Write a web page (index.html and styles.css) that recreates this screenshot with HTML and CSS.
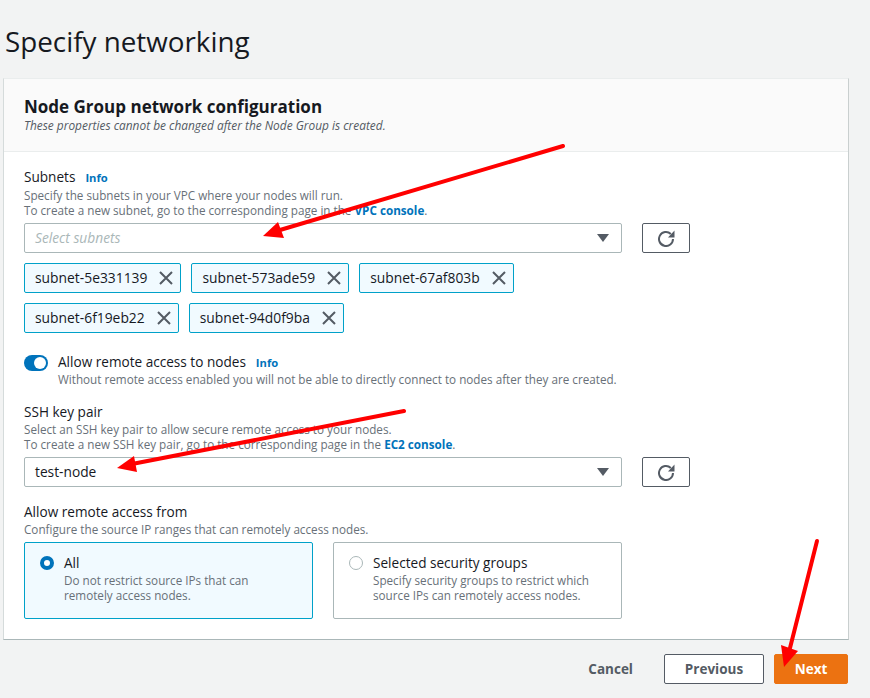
FILE: index.html
```html
<!DOCTYPE html>
<html lang="en">
<head>
  <meta charset="UTF-8" />
  <title>Specify networking</title>
  <link rel="stylesheet" href="styles.css">
</head>
<body>

<h1 class="page-title">Specify networking</h1>

<section class="card">
  <header class="card-header">
    <h2>Node Group network configuration</h2>
    <p>These properties cannot be changed after the Node Group is created.</p>
  </header>

  <div class="card-body">
    <div class="label-row subnets-label">
      <span class="label">Subnets</span>
      <a class="info">Info</a>
    </div>
    <p class="desc">Specify the subnets in your VPC where your nodes will run.</p>
    <p class="desc">To create a new subnet, go to the corresponding page in the <a class="link">VPC console</a>.</p>

    <div class="select-row">
      <div class="select placeholder">
        <span>Select subnets</span>
        <i class="caret"></i>
      </div>
      <button class="refresh">
        <svg width="18" height="18" viewBox="0 0 18 18"><path d="M13.8 4.9A7 7 0 1 0 16 10" fill="none" stroke="#545b64" stroke-width="2"/><path d="M11 8.5h6.5V1.5z" fill="#545b64"/></svg>
      </button>
    </div>

    <div class="chips">
      <span class="chip">subnet-5e331139<svg class="x" viewBox="0 0 14 14"><path d="M1 1l12 12M13 1L1 13"/></svg></span>
      <span class="chip">subnet-573ade59<svg class="x" viewBox="0 0 14 14"><path d="M1 1l12 12M13 1L1 13"/></svg></span>
      <span class="chip">subnet-67af803b<svg class="x" viewBox="0 0 14 14"><path d="M1 1l12 12M13 1L1 13"/></svg></span>
      <span class="chip">subnet-6f19eb22<svg class="x" viewBox="0 0 14 14"><path d="M1 1l12 12M13 1L1 13"/></svg></span>
      <span class="chip">subnet-94d0f9ba<svg class="x" viewBox="0 0 14 14"><path d="M1 1l12 12M13 1L1 13"/></svg></span>
    </div>

    <div class="toggle-row">
      <span class="toggle"><i></i></span>
      <div>
        <div class="label-row">
          <span class="label">Allow remote access to nodes</span>
          <a class="info">Info</a>
        </div>
        <p class="desc">Without remote access enabled you will not be able to directly connect to nodes after they are created.</p>
      </div>
    </div>

    <div class="label-row ssh-label">
      <span class="label">SSH key pair</span>
    </div>
    <p class="desc">Select an SSH key pair to allow secure remote access to your nodes.</p>
    <p class="desc">To create a new SSH key pair, go to the corresponding page in the <a class="link">EC2 console</a>.</p>

    <div class="select-row">
      <div class="select">
        <span>test-node</span>
        <i class="caret"></i>
      </div>
      <button class="refresh">
        <svg width="18" height="18" viewBox="0 0 18 18"><path d="M13.8 4.9A7 7 0 1 0 16 10" fill="none" stroke="#545b64" stroke-width="2"/><path d="M11 8.5h6.5V1.5z" fill="#545b64"/></svg>
      </button>
    </div>

    <div class="label-row from-label">
      <span class="label">Allow remote access from</span>
    </div>
    <p class="desc">Configure the source IP ranges that can remotely access nodes.</p>

    <div class="radio-cards">
      <div class="radio-card selected">
        <span class="radio"></span>
        <div>
          <div class="radio-title">All</div>
          <p class="desc">Do not restrict source IPs that can remotely access nodes.</p>
        </div>
      </div>
      <div class="radio-card">
        <span class="radio"></span>
        <div>
          <div class="radio-title">Selected security groups</div>
          <p class="desc">Specify security groups to restrict which source IPs can remotely access nodes.</p>
        </div>
      </div>
    </div>
  </div>
</section>

<div class="actions">
  <button class="btn-link">Cancel</button>
  <button class="btn">Previous</button>
  <button class="btn btn-primary">Next</button>
</div>

<!-- annotation arrows drawn over the screenshot -->
<svg class="arrows" width="870" height="698" viewBox="0 0 870 698">
  <g stroke="#ff0000" stroke-width="4" stroke-linecap="round">
    <line x1="563" y1="146" x2="280" y2="230"/>
    <line x1="404" y1="411" x2="132" y2="464"/>
    <line x1="817" y1="541" x2="790" y2="648"/>
  </g>
  <g fill="#ff0000">
    <polygon points="263,236 278,222 284,238"/>
    <polygon points="117,468 134,456 137,472"/>
    <polygon points="784,667 781,645 798,651"/>
  </g>
</svg>

</body>
</html>
```

FILE: styles.css
```css
* {
  box-sizing: border-box;
}

body {
  margin: 0;
  width: 870px;
  height: 698px;
  overflow: hidden;
  position: relative;
  background: #f2f3f3;
  color: #16191f;
  font-family: 'Open Sans', sans-serif;
  font-size: 14px;
}

p {
  margin: 0;
}

.page-title {
  margin: 0;
  padding: 22px 0 0 5px;
  height: 78px;
  font-size: 27.8px;
  line-height: 38px;
  font-weight: 400;
}

.card {
  margin-left: 3px;
  width: 846px;
  height: 562px;
  background: #fff;
  border: 1px solid #d5dbdb;
  border-top-color: #eaeded;
  border-bottom-color: #aab7b8;
  border-right-color: #c9cfcf;
}

.card-header {
  height: 73px;
  padding: 17px 20px 0;
  background: #fafafa;
  border-bottom: 1px solid #eaeded;
}

.card-header h2 {
  margin: 0;
  font-size: 17px;
  line-height: 21px;
  font-weight: 700;
}

.card-header p {
  margin-top: 1px;
  font-size: 11.9px;
  line-height: 14px;
  font-style: italic;
  color: #545b64;
}

.card-body {
  padding: 14px 20px 0;
}

.label-row {
  display: flex;
  align-items: baseline;
  gap: 10px;
  line-height: 19px;
}

.subnets-label {
  padding: 1px 0;
}

.label {
  font-size: 13.6px;
}

.info {
  color: #0073bb;
  font-weight: 700;
  font-size: 11.2px;
}

.link {
  color: #0073bb;
  font-weight: 700;
}

.desc {
  font-size: 11.7px;
  line-height: 15px;
  color: #687078;
}

.select-row {
  display: flex;
  gap: 20px;
  margin-top: 5px;
}

.select {
  width: 598px;
  height: 30px;
  padding: 0 11px 1px 10px;
  display: flex;
  align-items: center;
  justify-content: space-between;
  border: 1px solid #aab7b8;
  border-radius: 2px;
  background: #fff;
  font-size: 13.75px;
}

.placeholder span {
  color: #aab7b8;
  font-style: italic;
}

.caret {
  width: 0;
  height: 0;
  border-left: 6px solid transparent;
  border-right: 6px solid transparent;
  border-top: 8px solid #545b64;
  margin-right: 1px;
}

.refresh {
  width: 48px;
  height: 30px;
  padding: 0;
  display: flex;
  align-items: center;
  justify-content: center;
  background: #fff;
  border: 1px solid #545b64;
  border-radius: 2px;
}

.chips {
  display: flex;
  flex-wrap: wrap;
  gap: 10px;
  width: 598px;
  margin-top: 10px;
}

.chip {
  height: 30px;
  padding: 0 7px 2px 10px;
  display: flex;
  align-items: center;
  gap: 12px;
  background: #f1faff;
  border: 1px solid #00a1c9;
  border-radius: 2px;
  font-size: 13.85px;
}

.x {
  width: 14px;
  height: 14px;
  margin-top: 2px;
  fill: none;
  stroke: #545b64;
  stroke-width: 2;
}

.toggle-row {
  display: flex;
  gap: 10px;
  margin-top: 19px;
}

.toggle {
  width: 24px;
  height: 16px;
  margin-top: 3px;
  padding: 2px;
  display: flex;
  justify-content: flex-end;
  background: #0073bb;
  border-radius: 8px;
}

.toggle i {
  width: 12px;
  height: 12px;
  border-radius: 50%;
  background: #fff;
}

.ssh-label {
  margin-top: 15px;
  padding-bottom: 1px;
}

.from-label {
  margin-top: 15px;
  padding-bottom: 1px;
}

.radio-cards {
  display: flex;
  gap: 20px;
  margin-top: 5px;
}

.radio-card {
  width: 289px;
  height: 77px;
  padding: 10px 15px;
  display: flex;
  gap: 10px;
  border: 1px solid #aab7b8;
  border-radius: 2px;
}

.radio-card.selected {
  background: #f1faff;
  border-color: #00a1c9;
}

.radio {
  flex: none;
  width: 14px;
  height: 14px;
  margin-top: 3px;
  border: 1px solid #aab7b8;
  border-radius: 50%;
  background: #fff;
}

.selected .radio {
  border: 4px solid #0073bb;
}

.radio-title {
  font-size: 13.6px;
  line-height: 20px;
}

.actions {
  display: flex;
  align-items: center;
  justify-content: flex-end;
  gap: 10px;
  width: 848px;
  margin-top: 14px;
}

.btn,
.btn-link {
  height: 30px;
  font-family: inherit;
  font-size: 13.5px;
  font-weight: 700;
  color: #545b64;
  border-radius: 2px;
}

.btn-link {
  margin-right: 21px;
  padding: 0;
  background: none;
  border: none;
}

.btn {
  width: 100px;
  padding: 0 0 1px;
  background: #fff;
  border: 1px solid #545b64;
}

.btn-primary {
  width: 74px;
  background: #ec7211;
  border-color: #ec7211;
  color: #fff;
}

.arrows {
  position: absolute;
  top: 0;
  left: 0;
  pointer-events: none;
}
```
